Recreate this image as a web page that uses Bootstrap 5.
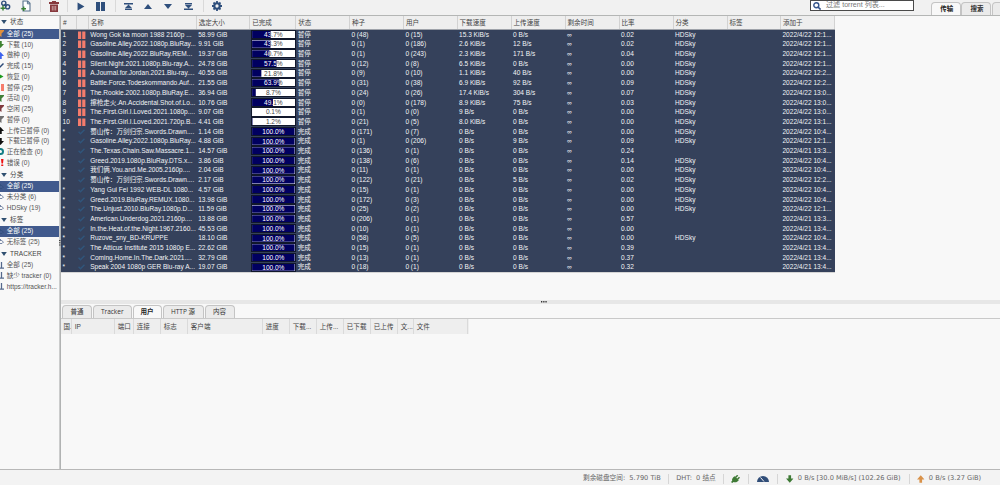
<!DOCTYPE html>
<html lang="zh-CN">
<head>
  <meta charset="UTF-8" />
  <meta name="viewport" content="width=device-width, initial-scale=1.0"/>
  <title>qBittorrent</title>
  <link href="https://cdn.jsdelivr.net/npm/bootstrap@5.3.2/dist/css/bootstrap.min.css" rel="stylesheet"/>

  <style>
    body {
      height: 100vh;
      background: #f8f8f8;
      color: #333;
      font-family: "Liberation Sans", "Noto Sans CJK SC", sans-serif;
      font-size: 6.55px;
      line-height: 9.7px;
    }
    svg {
      display: block;
      flex: none;
    }

    /* toolbar */
    .toolbar {
      height: 16px;
      background: #f1f1f1;
      border-bottom: 1px solid #b4b6b5;
    }
    .tool {
      height: 12px;
      color: #2f4f7c;
    }
    .tool.divide {
      border-left: 1px solid #d9d9d9;
    }
    .filter-box {
      width: 104px;
      height: 11px;
      margin-right: 17px;
      border: 1px solid #4a4a4a;
      background: #fff;
      color: #777;
      font-size: 7.1px;
    }
    .tab-item {
      border: 1px solid #c4c4c4;
      border-bottom: 0;
      border-radius: 4px 4px 0 0;
      background: #ebebeb;
      font-family: "Open Sans", "Noto Sans CJK SC", sans-serif;
      font-size: 6.5px;
      white-space: nowrap;
    }
    .tab-item.current {
      background: #f8f8f8;
      font-weight: 600;
      color: #222;
    }
    .top-tab {
      width: 29.5px;
      height: 13px;
      padding-left: 2px;
      font-weight: 600;
    }

    /* filter column */
    .filters {
      width: 58.5px;
      background: #f8f8f8;
      color: #555;
    }
    .filter-head {
      height: 12.7px;
      padding-left: .5px;
      color: #444;
    }
    .filter-head span {
      padding-left: 3.6px;
    }
    .filter-item {
      height: 10.75px;
      padding-bottom: .8px;
      white-space: nowrap;
    }
    .filter-item svg {
      width: 7px;
      height: 7px;
      margin: 0 3.2px 0 -3.5px;
    }
    .filter-item.current {
      background: #415a8d;
      color: #fff;
    }
    .splitter-v {
      width: 2.5px;
      background: linear-gradient(90deg, #d8d8d8, #a4a7a7);
      color: #444;
    }
    .splitter-h {
      height: 4px;
      margin-top: auto;
      background: #e7e7e7;
      color: #333;
    }

    /* torrent list */
    .torrents-panel {
      height: 288px;
    }
    .torrents {
      width: 774px;
      border-bottom: 1px solid #d5d5d5;
    }
    .trow {
      display: grid;
      grid-template-columns: 15.7px 12px 108px 53.5px 46px 53.7px 54px 53.7px 54px 54px 54px 54px 54px 53.4px 53.9px;
      height: 9.71px;
      background: #35415b;
      color: #f2f4f6;
      line-height: 9px;
    }
    .trow > div {
      padding-left: 1.5px;
      overflow: hidden;
      white-space: nowrap;
    }
    .trow.head {
      height: 13.6px;
      line-height: 13.4px;
      background: #eee;
      color: #444;
      border-bottom: 1px solid #9fa3aa;
    }
    .trow.head > div {
      border-right: 1px solid #d2d2d2;
      padding-left: 2px;
    }
    .bar {
      position: relative;
      width: 44.5px;
      height: 9.2px;
      margin: .2px 0 0 -.6px;
      border: 1px solid #11182c;
      background: #fff;
      color: #444;
      line-height: 7.2px;
      text-align: center;
    }
    .bar-fill {
      position: absolute;
      inset: 0;
      background: #000060;
      color: #fff;
    }

    /* details */
    .detail-tabs {
      height: 14.7px;
      padding-left: 1px;
      border-bottom: 1.5px solid #c9c9c9;
    }
    .detail-tabs .tab-item {
      height: 13px;
      margin-right: 1px;
    }
    .peers {
      display: grid;
      grid-template-columns: 11.3px 43px 19px 27px 27px 75px 27px 27px 27px 27px 27px 16px 54px;
      width: 407.8px;
      height: 15.3px;
      background: #eee;
      color: #444;
      line-height: 15px;
    }
    .peers div {
      padding-left: 2.5px;
      border-right: 1px solid #dadada;
      overflow: hidden;
      white-space: nowrap;
    }
    .details {
      height: 151px;
    }

    /* status bar */
    .statusbar {
      height: 16px;
      padding-right: 18.7px;
      border-top: 1px solid #b8b8b8;
      background: #f3f3f3;
      color: #666;
      font-family: "DejaVu Sans", "Noto Sans CJK SC", sans-serif;
      font-size: 6.65px;
      white-space: nowrap;
    }
    .statusbar > div {
      height: 10px;
      margin-top: 4px;
    }
    .statusbar > div + div {
      border-left: 1px solid #d6d6d6;
    }
  </style>
</head>
<body class="d-flex flex-column overflow-hidden">

<svg width="0" height="0" class="position-absolute">
  <symbol id="funnel" viewBox="0 0 14 14"><path fill="currentColor" d="M0 0h14v2L9 7v7l-4-3V7L0 2z"/></symbol>
  <symbol id="arrow-down" viewBox="0 0 14 14"><path fill="currentColor" d="M4.500 0h5v6h4.500l-7 8-7-8h4.500z"/></symbol>
  <symbol id="arrow-up" viewBox="0 0 14 14"><path fill="currentColor" d="M4.500 14h5V8h4.500L7 0 0 8h4.500z"/></symbol>
  <symbol id="check" viewBox="0 0 14 14"><path fill="none" stroke="currentColor" stroke-width="3" d="M1 7l4 4 8-8"/></symbol>
  <symbol id="play" viewBox="0 0 14 14"><path fill="currentColor" d="M1 0l12 7-12 7z"/></symbol>
  <symbol id="pause" viewBox="0 0 14 14"><path fill="currentColor" d="M0 0h6v14H0zM8 0h6v14H8z"/></symbol>
  <symbol id="refresh" viewBox="0 0 14 14"><circle cx="7" cy="7" r="5" fill="none" stroke="currentColor" stroke-width="4"/></symbol>
  <symbol id="alert" viewBox="0 0 14 14"><path fill="currentColor" d="M8 0h5l-1 9H9zM8.500 11h4v3h-4z"/></symbol>
  <symbol id="label" viewBox="0 0 14 14"><path fill="none" stroke="currentColor" stroke-width="2" d="M2 11h8l3-3-4-3H6M6 2l3 3"/></symbol>
  <symbol id="server" viewBox="0 0 14 14"><path fill="none" stroke="currentColor" stroke-width="2.500" d="M9 0v12M2 12h12"/></symbol>
  <symbol id="caret" viewBox="0 0 14 10"><path fill="currentColor" d="M0 0h14L7 10z"/></symbol>
</svg>

<!-- Toolbar -->
<div class="toolbar d-flex align-items-start flex-shrink-0">
  <div class="tool d-flex align-items-center" style="width:21px">
    <svg width="11" height="12" viewBox="0 0 11 12"><g fill="none" stroke="#2f4f7c" stroke-width="1.4"><circle cx="3.8" cy="3.2" r="2.1"/><circle cx="7.6" cy="6.8" r="2.1"/><path d="M4.5 4l2.4 2.2"/></g><path stroke="#3c8238" stroke-width="1.5" d="M3 5.6v5M.5 8.2h5"/></svg>
  </div>
  <div class="tool d-flex align-items-center" style="width:19px">
    <svg width="10" height="12" viewBox="0 0 10 12"><path fill="#fff" stroke="#59748e" stroke-width="1.1" d="M2 1h4.7L9 3.3V11H2z"/><path fill="none" stroke="#59748e" d="M6.4 1v2.8H9"/><path stroke="#3c8238" stroke-width="1.4" d="M2.7 6.5v4.6M.3 8.8H5"/></svg>
  </div>
  <div class="tool divide d-flex align-items-center" style="width:27px">
    <svg class="ms-2" width="10" height="11" viewBox="0 0 10 11"><path fill="#87393d" d="M3 0h4v1h3v2H0V1h3zM1 3.6h8V11H1z"/><path stroke="#e7caca" stroke-width=".7" d="M3.3 5v4.5M5 5v4.5M6.7 5v4.5"/></svg>
  </div>
  <div class="tool divide d-flex align-items-center" style="width:48px;padding-left:9px">
    <svg width="8" height="9"><use href="#play"/></svg>
    <svg width="9" height="9" viewBox="0 0 9 9" style="margin-left:11px"><path fill="currentColor" d="M0 0h4v9H0zM5 0h4v9H5z"/></svg>
  </div>
  <div class="tool divide d-flex align-items-center" style="width:88px;padding-left:8px">
    <svg width="9" height="7" viewBox="0 0 9 7"><path fill="currentColor" d="M0 0h9v1.4H0zM4.5 1.6L8 5H1zM1 5.6h7V7H1z"/></svg>
    <svg width="8" height="5" viewBox="0 0 8 5" style="margin-left:11px"><path fill="currentColor" d="M4 0l4 5H0z"/></svg>
    <svg width="8" height="5" viewBox="0 0 8 5" style="margin-left:12px"><path fill="currentColor" d="M0 0h8L4 5z"/></svg>
    <svg width="9" height="7" viewBox="0 0 9 7" style="margin-left:12px"><path fill="currentColor" d="M1 0h7v1.4H1zM1 2h7L4.5 5.4zM0 5.6h9V7H0z"/></svg>
  </div>
  <div class="tool divide d-flex align-items-center ps-2">
    <svg width="10" height="10" viewBox="0 0 10 10"><circle cx="5" cy="5" r="2.7" fill="none" stroke="currentColor" stroke-width="2.1"/><path stroke="currentColor" stroke-width="1.8" d="M5 0v2M5 8v2M0 5h2M8 5h2M1.5 1.5l1.3 1.3M7.2 7.2l1.3 1.3M8.5 1.5L7.2 2.8M2.8 7.2L1.5 8.5"/></svg>
  </div>
  <div class="filter-box ms-auto d-flex align-items-center">
    <svg width="8" height="8" viewBox="0 0 8 8" style="margin:0 5.5px 0 1.5px"><circle cx="3.3" cy="3.3" r="2.5" fill="none" stroke="#34538a" stroke-width="1.4"/><path stroke="#34538a" stroke-width="1.6" d="M5 5l2.6 2.6"/></svg>
    <span>过滤 torrent 列表...</span>
  </div>
  <div class="d-flex align-self-end" style="width:69px;gap:.8px">
    <div class="tab-item current top-tab d-flex flex-shrink-0 align-items-center justify-content-center">传输</div>
    <div class="tab-item top-tab d-flex flex-shrink-0 align-items-center justify-content-center">搜索</div>
    <div class="tab-item top-tab flex-shrink-0"></div>
  </div>
</div>

<div class="d-flex flex-grow-1 overflow-hidden">
  <aside class="filters flex-shrink-0" id="filters"></aside>
  <div class="splitter-v flex-shrink-0 d-flex align-items-center justify-content-center">
    <svg width="2" height="6" viewBox="0 0 2 6"><path fill="currentColor" d="M0 0h1.5v1H0zM0 2.2h1.5v1H0zM0 4.4h1.5v1H0z"/></svg>
  </div>

  <main class="flex-grow-1 d-flex flex-column">
    <div class="torrents-panel d-flex flex-column">
      <div class="torrents" id="torrents">
        <div class="trow head">
          <div>#</div><div></div><div>名称</div><div>选定大小</div><div>已完成</div><div>状态</div><div>种子</div><div>用户</div>
          <div>下载速度</div><div>上传速度</div><div>剩余时间</div><div>比率</div><div>分类</div><div>标签</div><div>添加于</div>
        </div>
      </div>
      <div class="splitter-h d-flex align-items-center justify-content-center">
        <svg width="6" height="2" viewBox="0 0 6 2" style="margin-left:27px"><path fill="currentColor" d="M0 0h1.3v1.5H0zM2.2 0h1.3v1.5H2.2zM4.4 0h1.3v1.5H4.4z"/></svg>
      </div>
    </div>

    <div class="details">
      <div class="detail-tabs d-flex align-items-end">
        <div class="tab-item d-flex align-items-center justify-content-center" style="width:30px">普通</div>
        <div class="tab-item d-flex align-items-center justify-content-center" style="width:38.5px">Tracker</div>
        <div class="tab-item current d-flex align-items-center justify-content-center" style="width:29px">用户</div>
        <div class="tab-item d-flex align-items-center justify-content-center" style="width:41px">HTTP 源</div>
        <div class="tab-item d-flex align-items-center justify-content-center" style="width:30px">内容</div>
      </div>
      <div class="peers">
        <div>国.</div><div>IP</div><div>端口</div><div>连接</div><div>标志</div><div>客户端</div><div>进度</div>
        <div>下载...</div><div>上传...</div><div>已下载</div><div>已上传</div><div>文...</div><div>文件</div>
      </div>
    </div>
  </main>
</div>

<!-- Status bar -->
<footer class="statusbar d-flex justify-content-end flex-shrink-0">
  <div class="d-flex align-items-center" style="width:84.7px">剩余磁盘空间:&nbsp; 5.790 TiB</div>
  <div class="d-flex align-items-center" style="width:55.6px;padding-left:7.5px">DHT:&nbsp; 0 结点</div>
  <div class="d-flex align-items-center justify-content-center" style="width:25px;padding-right:2px">
    <svg width="9" height="8" viewBox="0 0 9 8"><path fill="#3e7a35" d="M0 7l1.200-1.200C.5 4 2 2 3.800 1.200l4 4C6.500 7 4.300 7.800 2.600 6.900L1.200 8z"/><path stroke="#3e7a35" stroke-width="1.500" d="M4.500 2.500L6.700.3M6.300 4.500l2.200-2.200"/></svg>
  </div>
  <div class="d-flex align-items-center justify-content-center" style="width:29px">
    <svg width="12" height="6" viewBox="0 0 12 6"><path fill="#304d78" d="M0 6a6 6 0 0 1 12 0z"/><path stroke="#f3f3f3" d="M3.500 1.500L7 5.500"/></svg>
  </div>
  <div class="d-flex align-items-center" style="width:132px;padding-left:8px">
    <svg width="7.500" height="8" class="me-1" color="#3e7a35"><use href="#arrow-down"/></svg>
    <span>0 B/s [30.0 MiB/s] (102.26 GiB)</span>
  </div>
  <div class="d-flex align-items-center" style="width:72px;padding-left:7px">
    <svg width="7.500" height="8" class="me-1" color="#d9924a"><use href="#arrow-up"/></svg>
    <span>0 B/s (3.27 GiB)</span>
  </div>
</footer>

<script src="https://cdn.jsdelivr.net/npm/bootstrap@5.3.2/dist/js/bootstrap.bundle.min.js"></script>

<script>
  // [text, icon, colour]; the first item of a group is the selected one
  const filterGroups = [
    ['状态', [
      ['全部 (25)', 'funnel', '#e0913c'], ['下载 (10)', 'arrow-down', '#3e8230'], ['做种 (0)', 'arrow-up', '#3d62ee'],
      ['完成 (15)', 'check', '#2d4a78'], ['恢复 (0)', 'play', '#1d9a1d'], ['暂停 (25)', 'pause', '#f67c6b'],
      ['活动 (0)', 'funnel', '#41803a'], ['空闲 (25)', 'funnel', '#813a3d'], ['暂停 (0)', 'funnel', '#707070'],
      ['上传已暂停 (0)', 'arrow-up', '#111'], ['下载已暂停 (0)', 'arrow-down', '#111'],
      ['正在检查 (0)', 'refresh', '#147f86'], ['错误 (0)', 'alert', '#e11']
    ]],
    ['分类', [['全部 (25)', 'label', '#34527f'], ['未分类 (6)', 'label', '#7687a5'], ['HDSky (19)', 'label', '#7687a5']]],
    ['标签', [['全部 (25)', 'label', '#34527f'], ['无标签 (25)', 'label', '#7687a5']]],
    ['TRACKER', [['全部 (25)', 'server', '#55698d'], ['缺少 tracker (0)', 'server', '#55698d'], ['https://tracker.h...', 'server', '#55698d']]]
  ];

  // name, size, done, seeds, peers, down, up, ratio, category, added
  const torrents = [
    ['Wong Gok ka moon 1988 2160p ...', '58.99', 43.7, 48, 15, '15.3 KiB/s', '0 B/s', '0.02', 'HDSky', '22 12:1'],
    ['Gasoline.Alley.2022.1080p.BluRay...', '9.91', 43.3, 1, 186, '2.6 KiB/s', '12 B/s', '0.02', 'HDSky', '22 12:1'],
    ['Gasoline.Alley.2022.BluRay.REM...', '19.37', 40.7, 1, 243, '2.3 KiB/s', '171 B/s', '0.04', 'HDSky', '22 12:1'],
    ['Silent.Night.2021.1080p.Blu-ray.A...', '24.78', 57.5, 12, 8, '6.5 KiB/s', '0 B/s', '0.00', 'HDSky', '22 12:1'],
    ['A.Journal.for.Jordan.2021.Blu-ray....', '40.55', 21.8, 9, 10, '1.1 KiB/s', '40 B/s', '0.00', 'HDSky', '22 12:2'],
    ['Battle.Force.Todeskommando.Auf...', '21.55', 63.9, 31, 38, '6.9 KiB/s', '92 B/s', '0.09', 'HDSky', '22 12:2'],
    ['The.Rookie.2002.1080p.BluRay.E...', '36.94', 8.7, 24, 26, '17.4 KiB/s', '304 B/s', '0.07', 'HDSky', '22 13:0'],
    ['擦枪走火.An.Accidental.Shot.of.Lo...', '10.76', 49.1, 0, 178, '8.9 KiB/s', '75 B/s', '0.03', 'HDSky', '22 13:0'],
    ['The.First.Girl.I.Loved.2021.1080p....', '9.07', 0.1, 1, 0, '9 B/s', '0 B/s', '0.00', 'HDSky', '22 13:0'],
    ['The.First.Girl.I.Loved.2021.720p.B...', '4.41', 1.2, 21, 5, '8.0 KiB/s', '0 B/s', '0.00', 'HDSky', '22 13:1'],
    ['蜀山传：万剑归宗.Swords.Drawn....', '1.14', 100, 171, 7, '0 B/s', '0 B/s', '0.00', 'HDSky', '22 10:4'],
    ['Gasoline.Alley.2022.1080p.BluRay...', '4.88', 100, 1, 206, '0 B/s', '9 B/s', '0.09', 'HDSky', '22 12:1'],
    ['The.Texas.Chain.Saw.Massacre.1...', '14.57', 100, 136, 1, '0 B/s', '0 B/s', '0.24', '', '21 13:3'],
    ['Greed.2019.1080p.BluRay.DTS.x...', '3.86', 100, 138, 6, '0 B/s', '0 B/s', '0.14', 'HDSky', '22 10:4'],
    ['我们俩.You.and.Me.2005.2160p....', '2.04', 100, 11, 1, '0 B/s', '0 B/s', '0.00', 'HDSky', '22 10:4'],
    ['蜀山传：万剑归宗.Swords.Drawn....', '2.17', 100, 122, 21, '0 B/s', '5 B/s', '0.02', 'HDSky', '22 12:2'],
    ['Yang Gui Fei 1992 WEB-DL 1080...', '4.57', 100, 15, 1, '0 B/s', '0 B/s', '0.00', 'HDSky', '22 10:4'],
    ['Greed.2019.BluRay.REMUX.1080...', '13.98', 100, 172, 3, '0 B/s', '0 B/s', '0.00', 'HDSky', '22 10:4'],
    ['The.Unjust.2010.BluRay.1080p.D...', '11.59', 100, 25, 2, '0 B/s', '0 B/s', '0.00', 'HDSky', '22 12:1'],
    ['American.Underdog.2021.2160p....', '13.88', 100, 206, 1, '0 B/s', '0 B/s', '0.57', '', '21 13:3'],
    ['In.the.Heat.of.the.Night.1967.2160...', '45.53', 100, 10, 1, '0 B/s', '0 B/s', '0.00', '', '21 13:4'],
    ['Ruzove_sny_BD-KRUPPE', '18.10', 100, 58, 5, '0 B/s', '0 B/s', '0.00', 'HDSky', '22 10:4'],
    ['The Atticus Institute 2015 1080p E...', '22.62', 100, 15, 1, '0 B/s', '0 B/s', '0.39', '', '21 13:4'],
    ['Coming.Home.In.The.Dark.2021....', '32.79', 100, 13, 1, '0 B/s', '0 B/s', '0.37', '', '21 13:4'],
    ['Speak 2004 1080p GER Blu-ray A...', '19.07', 100, 18, 1, '0 B/s', '0 B/s', '0.32', '', '21 13:4']
  ];

  document.getElementById('filters').innerHTML = filterGroups.map(([title, items]) => `
    <div class="filter-head d-flex align-items-center">
      <svg width="6" height="4" color="#2f4f70"><use href="#caret"/></svg><span>${title}</span>
    </div>
    ${items.map(([text, icon, color], i) => `
      <div class="filter-item d-flex align-items-center ${i === 0 && title !== 'TRACKER' ? 'current' : ''}">
        <svg style="color:${color}"><use href="#${icon}"/></svg>${text}
      </div>`).join('')}
  `).join('');

  document.getElementById('torrents').innerHTML += torrents.map((t, i) => {
    const [name, size, done, seeds, peers, down, up, ratio, category, added] = t;
    const finished = done === 100;
    const percent = done.toFixed(1) + '%';
    const icon = finished
      ? '<svg width="7" height="9.500" color="#30557a"><use href="#check"/></svg>'
      : '<svg width="7.500" height="9.700" viewBox="0 0 7.500 9.700"><path fill="#f47c6c" d="M0 1.500h3.200v7.500H0zM4.200 1.500h3.200v7.500H4.200z"/></svg>';
    return `
      <div class="trow">
        <div>${finished ? '*' : i + 1}</div>
        <div>${icon}</div>
        <div>${name}</div>
        <div>${size} GiB</div>
        <div><div class="bar">${percent}<div class="bar-fill" style="clip-path:inset(0 ${100 - done}% 0 0)">${percent}</div></div></div>
        <div>${finished ? '完成' : '暂停'}</div>
        <div>0 (${seeds})</div>
        <div>0 (${peers})</div>
        <div>${down}</div>
        <div>${up}</div>
        <div>∞</div>
        <div>${ratio}</div>
        <div>${category}</div>
        <div></div>
        <div>2022/4/${added}...</div>
      </div>`;
  }).join('');
</script>

</body>
</html>
